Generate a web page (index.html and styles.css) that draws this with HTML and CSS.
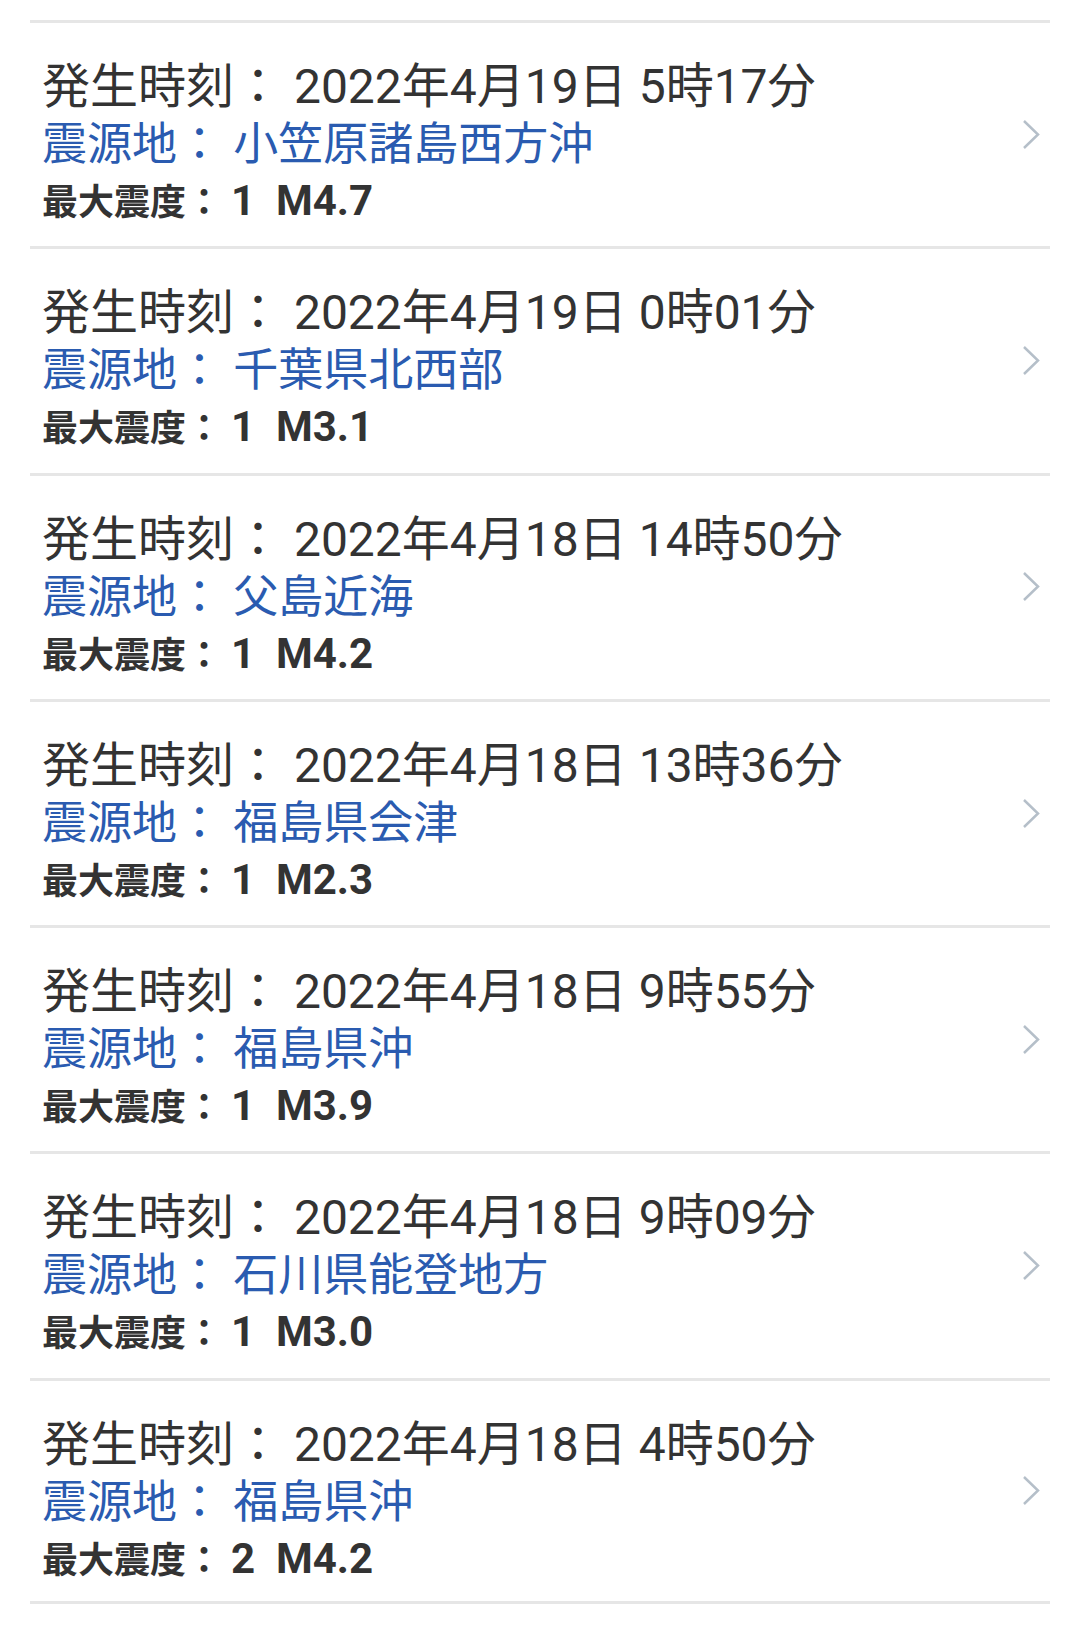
FILE: index.html
```html
<!DOCTYPE html>
<html lang="ja">
<head>
  <meta charset="UTF-8">
  <meta name="viewport" content="width=device-width, initial-scale=1">
  <title>地震情報</title>
  <link rel="stylesheet" href="styles.css">
</head>
<body>
  <ul class="quake-list">
    <li class="quake">
      <div class="info">
        <p class="time">発生時刻： 2022年4月19日 5時17分</p>
        <p class="place">震源地： 小笠原諸島西方沖</p>
        <p class="scale">最大震度： <span class="value">1&nbsp;&nbsp;M4.7</span></p>
      </div>
      <svg class="chevron" viewBox="0 0 18 32"><polyline points="2,2 16,15.5 2,29"/></svg>
    </li>
    <li class="quake">
      <div class="info">
        <p class="time">発生時刻： 2022年4月19日 0時01分</p>
        <p class="place">震源地： 千葉県北西部</p>
        <p class="scale">最大震度： <span class="value">1&nbsp;&nbsp;M3.1</span></p>
      </div>
      <svg class="chevron" viewBox="0 0 18 32"><polyline points="2,2 16,15.5 2,29"/></svg>
    </li>
    <li class="quake">
      <div class="info">
        <p class="time">発生時刻： 2022年4月18日 14時50分</p>
        <p class="place">震源地： 父島近海</p>
        <p class="scale">最大震度： <span class="value">1&nbsp;&nbsp;M4.2</span></p>
      </div>
      <svg class="chevron" viewBox="0 0 18 32"><polyline points="2,2 16,15.5 2,29"/></svg>
    </li>
    <li class="quake">
      <div class="info">
        <p class="time">発生時刻： 2022年4月18日 13時36分</p>
        <p class="place">震源地： 福島県会津</p>
        <p class="scale">最大震度： <span class="value">1&nbsp;&nbsp;M2.3</span></p>
      </div>
      <svg class="chevron" viewBox="0 0 18 32"><polyline points="2,2 16,15.5 2,29"/></svg>
    </li>
    <li class="quake">
      <div class="info">
        <p class="time">発生時刻： 2022年4月18日 9時55分</p>
        <p class="place">震源地： 福島県沖</p>
        <p class="scale">最大震度： <span class="value">1&nbsp;&nbsp;M3.9</span></p>
      </div>
      <svg class="chevron" viewBox="0 0 18 32"><polyline points="2,2 16,15.5 2,29"/></svg>
    </li>
    <li class="quake">
      <div class="info">
        <p class="time">発生時刻： 2022年4月18日 9時09分</p>
        <p class="place">震源地： 石川県能登地方</p>
        <p class="scale">最大震度： <span class="value">1&nbsp;&nbsp;M3.0</span></p>
      </div>
      <svg class="chevron" viewBox="0 0 18 32"><polyline points="2,2 16,15.5 2,29"/></svg>
    </li>
    <li class="quake">
      <div class="info">
        <p class="time">発生時刻： 2022年4月18日 4時50分</p>
        <p class="place">震源地： 福島県沖</p>
        <p class="scale">最大震度： <span class="value">2&nbsp;&nbsp;M4.2</span></p>
      </div>
      <svg class="chevron" viewBox="0 0 18 32"><polyline points="2,2 16,15.5 2,29"/></svg>
    </li>
  </ul>
</body>
</html>
```

FILE: styles.css
```css
body {
  margin: 0;
  background: #fff;
  font-family: Roboto, "Noto Sans CJK JP", sans-serif;
  color: #333;
}

.quake-list {
  list-style: none;
  margin: 0 30px;
  padding: 20px 0 0;
}

.quake {
  display: flex;
  height: 226.3px;
  box-sizing: border-box;
  border-top: 3px solid #e6e6e6;
  padding: 0 10px 0 12px;
}

.quake:last-child {
  border-bottom: 3px solid #e6e6e6;
}

.info {
  flex: 1;
  padding-top: 35px;
}

.info p {
  margin: 0;
  white-space: nowrap;
}

.time {
  font-size: 48px;
  line-height: 58px;
}

.place {
  font-size: 45px;
  line-height: 58px;
  color: #2a5bb0;
}

.scale {
  font-size: 36px;
  line-height: 53px;
  font-weight: bold;
}

.scale .value {
  font-size: 42px;
}

.chevron {
  align-self: center;
  width: 18px;
  height: 32px;
  fill: none;
  stroke: #b5bfc9;
  stroke-width: 2.5;
}
```
